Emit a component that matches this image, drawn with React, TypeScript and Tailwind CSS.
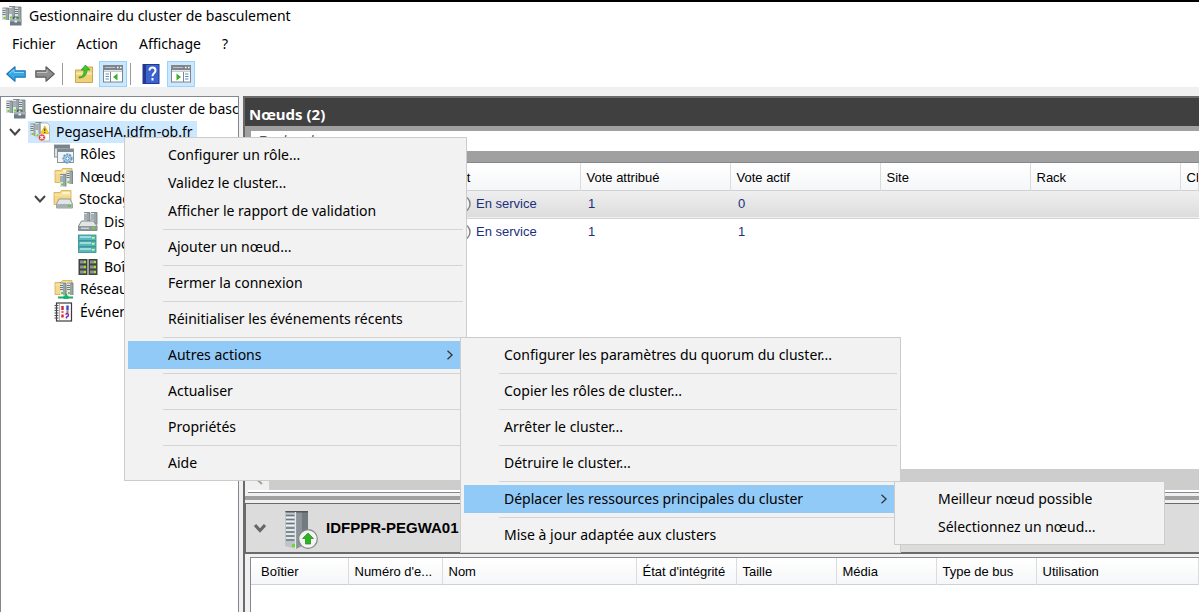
import React from 'react';

type IconProps = { className?: string };

const Tower: React.FC<{ x: number; y: number; h?: number }> = ({ x, y, h = 13 }) => (
  <g>
    <rect x={x} y={y} width="6" height={h} fill="#9aa5a9" />
    <rect x={x} y={y} width="3" height={h} fill="#dfe6e8" />
    <path d={`M${x} ${y + 2.5}h3M${x} ${y + 4.5}h3M${x} ${y + 6.5}h3`} stroke="#6d7a80" strokeWidth="1" />
    <path d={`M${x} ${y}h6v${h}`} stroke="#6f787c" strokeWidth="0.8" fill="none" />
    <rect x={x + 1} y={y + h - 3} width="2" height="2" fill="#6ed02a" />
  </g>
);

const Folder = () => (
  <>
    <path d="M1 3.500h6l1.500-2h9.500v14H1z" fill="#f4d98b" stroke="#d3ac50" strokeWidth="0.8" />
    <path d="M9 3h8v2H9z" fill="#fff3c8" />
    <path d="M1.500 6h16" stroke="#fbeab4" />
  </>
);

const ClusterIcon: React.FC<IconProps> = ({ className }) => (
  <svg viewBox="0 0 20 20" className={className} aria-hidden="true">
    <Tower x={0.5} y={2} h={12} />
    <Tower x={7} y={0.5} h={13} />
    <Tower x={13} y={1} h={13} />
    <path d="M8 13h11.500v6.500H8z" fill="#6f7b82" />
    <path d="M8 13h11.500v2.500H8z" fill="#a4b0b6" />
    <path d="M11.500 13v-2h4.500v2" stroke="#4f5a60" fill="none" />
    <rect x="12.500" y="14.500" width="2.500" height="2" fill="#e8eef0" />
  </svg>
);

const ClusterAlertIcon: React.FC<IconProps> = ({ className }) => (
  <svg viewBox="0 0 20 20" className={className} aria-hidden="true">
    <Tower x={0.5} y={2} h={12} />
    <Tower x={5.5} y={0.5} h={15} />
    <path d="M10.500 1h6.500l2.500 2.500V19h-9z" fill="#fdfdfd" stroke="#a6abb0" strokeWidth="0.8" />
    <path d="M14.800 4l4 7.500h-8z" fill="#ffd21e" stroke="#c79a00" strokeWidth="0.6" />
    <path d="M14.800 6.500v2.700M14.800 10v1" stroke="#222" strokeWidth="1" />
    <circle cx="11.800" cy="15.500" r="3.600" fill="#d8434a" stroke="#fff" strokeWidth="0.6" />
    <path d="M10.300 14l3 3M13.300 14l-3 3" stroke="#fff" strokeWidth="1.100" />
  </svg>
);

const RolesIcon: React.FC<IconProps> = ({ className }) => (
  <svg viewBox="0 0 20 20" className={className} aria-hidden="true">
    <rect x="0.5" y="1" width="15" height="12" fill="#dde2e6" stroke="#8c959b" />
    <rect x="0.5" y="1" width="15" height="3.500" fill="#79838a" />
    <rect x="3.500" y="5" width="16" height="13.500" fill="#f1f4f6" stroke="#8c959b" />
    <rect x="3.500" y="5" width="16" height="3" fill="#7f8a91" />
    <circle cx="13.500" cy="14.500" r="4.200" fill="#a9cdea" stroke="#6796bd" strokeWidth="1.800" strokeDasharray="2 1" />
    <circle cx="13.500" cy="14.500" r="1.600" fill="#fff" stroke="#6796bd" />
  </svg>
);

const NodesIcon: React.FC<IconProps> = ({ className }) => (
  <svg viewBox="0 0 20 20" className={className} aria-hidden="true">
    <Folder />
    <Tower x={6} y={7.5} h={12} />
    <Tower x={12.5} y={4} h={13} />
  </svg>
);

const StorageIcon: React.FC<IconProps> = ({ className }) => (
  <svg viewBox="0 0 20 20" className={className} aria-hidden="true">
    <Folder />
    <path d="M6 10h11l2.500 5v4H3.500v-4z" fill="#e2e5e7" stroke="#7f888d" strokeWidth="0.8" />
    <path d="M3.500 15h16v4h-16z" fill="#a8afb3" />
    <rect x="15" y="16" width="2.500" height="2" fill="#5ecb1f" />
  </svg>
);

const DisksIcon: React.FC<IconProps> = ({ className }) => (
  <svg viewBox="0 0 20 20" className={className} aria-hidden="true">
    <Tower x={6} y={0.5} h={12} />
    <Tower x={13} y={0.5} h={12} />
    <path d="M3.500 9h12l3.500 5v4.500H0.500V14z" fill="#e1e5e7" stroke="#737c81" strokeWidth="0.9" />
    <path d="M0.500 14h18.500v4.500H0.500z" fill="#8e979c" />
    <path d="M3 16.200h8" stroke="#e8ecee" />
    <rect x="14" y="15" width="3" height="2" fill="#6bd62a" />
  </svg>
);

const PoolsIcon: React.FC<IconProps> = ({ className }) => (
  <svg viewBox="0 0 20 20" className={className} aria-hidden="true">
    {[1, 7, 13].map((y) => (
      <g key={y}>
        <rect x="0.5" y={y} width="17.500" height="5.500" fill="#58b9bd" stroke="#35888d" strokeWidth="0.8" />
        <path d={`M2 ${y + 2}h11`} stroke="#b7e9ea" strokeWidth="1.500" />
        <rect x="14" y={y + 2} width="2.500" height="1.500" fill="#e4ff6a" />
      </g>
    ))}
  </svg>
);

const EnclosuresIcon: React.FC<IconProps> = ({ className }) => (
  <svg viewBox="0 0 20 20" className={className} aria-hidden="true">
    {[0.5, 10.5].map((x) => (
      <g key={x}>
        <rect x={x} y="2" width="9" height="16" fill="#3f4441" />
        {[3.5, 8.5, 13.5].map((y) => (
          <g key={y}>
            <rect x={x + 1.5} y={y} width="6" height="3" fill="#8b918d" />
            <rect x={x + 5.5} y={y + 0.5} width="2" height="2" fill="#a5e31f" />
          </g>
        ))}
      </g>
    ))}
  </svg>
);

const NetworksIcon: React.FC<IconProps> = ({ className }) => (
  <svg viewBox="0 0 20 20" className={className} aria-hidden="true">
    <Folder />
    <Tower x={6} y={4} h={12} />
    <Tower x={13} y={4} h={12} />
    <path d="M4 18.500h15M12 15v3" stroke="#22a56a" strokeWidth="1.800" />
    <rect x="9.500" y="16.500" width="5" height="3.500" fill="#18b46d" />
  </svg>
);

const EventsIcon: React.FC<IconProps> = ({ className }) => (
  <svg viewBox="0 0 20 20" className={className} aria-hidden="true">
    <rect x="2.500" y="1" width="15" height="18" fill="#fbfbfb" stroke="#3c3c3c" strokeWidth="1.200" />
    <path d="M5.500 2v16" stroke="#b5b5b5" />
    <path d="M0.500 3.500h4M0.500 6h4M0.500 8.500h4M0.500 11h4M0.500 13.500h4M0.500 16h4" stroke="#555" strokeWidth="1" />
    <path d="M8.500 4v4M8.500 12.500v3" stroke="#d4252f" strokeWidth="2.400" />
    <path d="M13.500 3.500v5" stroke="#2f4ed0" strokeWidth="2.400" />
    <path d="M7.500 10h2M12.500 10h2" stroke="#d4252f" strokeWidth="1.500" />
    <path d="M11.500 12.500q2.500-2 3 .5q0 1.500-2 2v1.500" stroke="#7b2f9c" strokeWidth="1.500" fill="none" />
  </svg>
);

const BackIcon = () => (
  <svg viewBox="0 0 20 16" className="h-4 w-5" aria-hidden="true">
    <path d="M0.800 8L9 0.800v4h10.200v6.400H9v4z" fill="#38a9e8" stroke="#2577b4" strokeWidth="1.200" strokeLinejoin="round" />
    <path d="M3.500 7.500L8 3.500V6.500h10" stroke="#8fd6fa" fill="none" />
  </svg>
);

const ForwardIcon = () => (
  <svg viewBox="0 0 20 16" className="h-4 w-5" aria-hidden="true">
    <path d="M19.200 8L11 0.800v4H0.800v6.400H11v4z" fill="#8f8f8f" stroke="#5f5f5f" strokeWidth="1.200" strokeLinejoin="round" />
    <path d="M2 6.500h10V3.500" stroke="#c4c4c4" fill="none" />
  </svg>
);

const UpFolderIcon = () => (
  <svg viewBox="0 0 20 20" className="size-5" aria-hidden="true">
    <path d="M1.500 6h8l2-3h7v15.500h-17z" fill="#f0cf78" stroke="#c79f45" strokeWidth="0.9" />
    <path d="M2 9.500h16" stroke="#fbe9ae" strokeWidth="2" />
    <path d="M5 13c4 0 5-3 5-7h-3l4.500-5L16 6h-3c0 5-3 8-8 8z" fill="#3fc432" stroke="#2a9420" strokeWidth="0.7" />
  </svg>
);

const PaneIcon: React.FC<{ side: 'left' | 'right' }> = ({ side }) => (
  <svg viewBox="0 0 20 18" className="h-[18px] w-5" aria-hidden="true">
    <rect x="0.5" y="0.5" width="19" height="16.500" fill="#fff" stroke="#7e868c" />
    <rect x="0.5" y="0.5" width="19" height="4.500" fill="#7e868c" />
    <path d="M2 2.500h10" stroke="#b9c0c5" />
    <path d="M14 2.500h1.500M17 2.500h1.500" stroke="#fff" strokeWidth="1.500" />
    <rect x="1" y="5.500" width="18" height="1.500" fill="#c5cbd0" />
    {side === 'left' ? (
      <>
        <path d="M7.500 7v10" stroke="#7e868c" />
        <path d="M2.500 9h3.500M2.500 11.500h3.500M2.500 14h3.500" stroke="#5a8fc4" />
        <path d="M14.500 8.500v7L10 12z" fill="#3fae2b" />
      </>
    ) : (
      <>
        <path d="M12.500 7v10" stroke="#7e868c" />
        <path d="M14 9h3.500M14 11.500h3.500M14 14h3.500" stroke="#5a8fc4" />
        <path d="M5.500 8.500v7L10 12z" fill="#3fae2b" />
      </>
    )}
  </svg>
);

const HelpIcon = () => (
  <svg viewBox="0 0 18 20" className="h-5 w-[18px]" aria-hidden="true">
    <rect x="1" y="0.5" width="16" height="19" fill="#3b62cf" stroke="#22388f" />
    <rect x="1" y="0.5" width="3" height="19" fill="#22388f" />
    <path d="M7.500 6.500q0-3 3-3t3 3q0 1.500-1.500 2.800t-1.500 3" stroke="#fff" strokeWidth="2" fill="none" />
    <rect x="9.500" y="14" width="2" height="2.500" fill="#fff" />
  </svg>
);

const ServerIcon = () => (
  <svg viewBox="0 0 34 40" className="h-10 w-[34px]" aria-hidden="true">
    <path d="M1 1l11 1v37L1 36z" fill="#bcc5ca" />
    <path d="M12 2h12v31l-12 6z" fill="#8b9599" />
    <path d="M18 2h6v31l-6 3z" fill="#727b7f" />
    <path d="M1 1h23v1.500H2z" fill="#4f575b" />
    <path d="M2 5.500h8.500M2 9.500h8.500M2 13.500h8.500M2 18h8.500M2 22h8.500M2 26h8.500M2 30h8.500" stroke="#6a7880" strokeWidth="1.500" />
    <path d="M2 7.500h8.500M2 11.500h8.500M2 15.500h8.500M2 20h8.500M2 24h8.500M2 28h8.500" stroke="#eef3f5" strokeWidth="1.500" />
    <path d="M11.500 2v37" stroke="#e3e9ec" strokeWidth="1.200" />
    <rect x="8" y="34" width="3" height="3" fill="#6bdc1e" />
    <circle cx="24" cy="29" r="9.300" fill="#f4f4f4" stroke="#868686" strokeWidth="1.200" />
    <path d="M24 23l5.500 5.500h-3V34h-5v-5.500h-3z" fill="#2fb324" stroke="#1c8a15" strokeWidth="0.7" />
  </svg>
);

const StatusIcon = () => (
  <svg viewBox="0 0 18 18" className="size-[18px] shrink-0" aria-hidden="true">
    <circle cx="9" cy="9" r="8" fill="#f6f6f6" stroke="#868686" strokeWidth="1.500" />
    <path d="M9 4l4.500 4.500H11V14H7V8.500H4.500z" fill="#2fb324" />
  </svg>
);

const Chevron: React.FC<IconProps> = ({ className }) => (
  <svg viewBox="0 0 12 12" className={className} fill="none" stroke="currentColor" aria-hidden="true">
    <path d="M1 3l5 5.500L11 3" />
  </svg>
);

type TreeNode = { label: string; icon: React.FC<IconProps>; indent: string; open?: boolean; selected?: boolean };

const tree: TreeNode[] = [
  { label: 'Gestionnaire du cluster de basculement', icon: ClusterIcon, indent: 'pl-[5px]' },
  { label: 'PegaseHA.idfm-ob.fr', icon: ClusterAlertIcon, indent: 'pl-[8px]', open: true, selected: true },
  { label: 'Rôles', icon: RolesIcon, indent: 'pl-[53px]' },
  { label: 'Nœuds', icon: NodesIcon, indent: 'pl-[53px]' },
  { label: 'Stockage', icon: StorageIcon, indent: 'pl-[33px]', open: true },
  { label: 'Disques', icon: DisksIcon, indent: 'pl-[77px]' },
  { label: 'Pools', icon: PoolsIcon, indent: 'pl-[77px]' },
  { label: 'Boîtiers', icon: EnclosuresIcon, indent: 'pl-[77px]' },
  { label: 'Réseaux', icon: NetworksIcon, indent: 'pl-[53px]' },
  { label: 'Événements', icon: EventsIcon, indent: 'pl-[53px]' },
];

type MenuEntry = { label: string; submenu?: MenuEntry[]; width?: string; offset?: string } | null;

const moveMenu: MenuEntry[] = [{ label: 'Meilleur nœud possible' }, { label: 'Sélectionnez un nœud...' }];

const moreMenu: MenuEntry[] = [
  { label: 'Configurer les paramètres du quorum du cluster...' },
  null,
  { label: 'Copier les rôles de cluster...' },
  null,
  { label: 'Arrêter le cluster...' },
  null,
  { label: 'Détruire le cluster...' },
  null,
  {
    label: 'Déplacer les ressources principales du cluster',
    submenu: moveMenu,
    width: 'w-[271px]',
    offset: 'left-[430px]',
  },
  null,
  { label: 'Mise à jour adaptée aux clusters' },
];

const contextMenu: MenuEntry[] = [
  { label: 'Configurer un rôle...' },
  { label: 'Validez le cluster...' },
  { label: 'Afficher le rapport de validation' },
  null,
  { label: 'Ajouter un nœud...' },
  null,
  { label: 'Fermer la connexion' },
  null,
  { label: 'Réinitialiser les événements récents' },
  null,
  { label: 'Autres actions', submenu: moreMenu, width: 'w-[441px]', offset: 'left-[332px]' },
  null,
  { label: 'Actualiser' },
  null,
  { label: 'Propriétés' },
  null,
  { label: 'Aide' },
];

const Menu: React.FC<{ items: MenuEntry[]; width: string }> = ({ items, width }) => (
  <ul role="menu" className={`${width} border border-[#cccccc] bg-[#f2f2f2] p-[3px]`}>
    {items.map((item, i) =>
      item === null ? (
        <li key={i} role="separator" className="flex h-2 items-center pl-[35px]">
          <div className="h-px w-full bg-[#d4d4d4]" />
        </li>
      ) : (
        <li key={i} role="none" className="relative">
          <button
            role="menuitem"
            className={`flex h-7 w-full items-center justify-between pr-2 pl-10 text-left whitespace-nowrap ${
              item.submenu ? 'bg-[#91c9f7]' : ''
            }`}
          >
            {item.label}
            {item.submenu && <Chevron className="size-[10px] -rotate-90 stroke-[1.5] text-[#333]" />}
          </button>
          {item.submenu && (
            <div className={`absolute -top-1 z-10 ${item.offset}`}>
              <Menu items={item.submenu} width={item.width ?? ''} />
            </div>
          )}
        </li>
      )
    )}
  </ul>
);

const th =
  'overflow-hidden border-r border-[#dcdcdc] bg-linear-to-b from-white to-[#f5f6f8] px-[6px] pt-[3px] text-left font-normal whitespace-nowrap';

const nodeRows = [
  { id: 1, status: 'En service', assigned: '1', current: '0' },
  { id: 2, status: 'En service', assigned: '1', current: '1' },
];

const App: React.FC = () => {
  return (
    <div className="relative flex min-h-screen flex-col overflow-hidden border-t-2 border-black bg-[#f0f0f0] font-['Noto_Sans','Open_Sans',sans-serif] text-[14px] leading-5 text-black">
      {/* Title bar */}
      <header className="flex h-7 items-center gap-[7px] bg-white pl-[2px]">
        <ClusterIcon className="size-5" />
        <h1>Gestionnaire du cluster de basculement</h1>
      </header>

      <nav className="flex h-7 items-center gap-[21px] bg-white pl-3">
        <button>Fichier</button>
        <button>Action</button>
        <button>Affichage</button>
        <button>?</button>
      </nav>

      {/* Toolbar */}
      <div className="flex h-[29px] items-center bg-white pt-[3px] pl-[6px]">
        <button aria-label="Précédent"><BackIcon /></button>
        <button aria-label="Suivant" className="ml-[9px]"><ForwardIcon /></button>
        <div className="ml-[7px] h-[22px] w-px bg-[#9a9a9a]" />
        <button aria-label="Dossier parent" className="ml-[11px]"><UpFolderIcon /></button>
        <button aria-label="Arborescence" className="ml-[5px] flex h-[26px] w-7 items-center justify-center border border-[#99d1ff] bg-[#cce8ff]">
          <PaneIcon side="left" />
        </button>
        <div className="ml-[3px] h-[22px] w-px bg-[#9a9a9a]" />
        <button aria-label="Aide" className="ml-[11px]"><HelpIcon /></button>
        <button aria-label="Volet Actions" className="ml-[7px] flex h-[26px] w-7 items-center justify-center border border-[#99d1ff] bg-[#cce8ff]">
          <PaneIcon side="right" />
        </button>
      </div>

      <div className="flex flex-1 gap-1 pt-[9px]">
        {/* Tree */}
        <aside className="w-[239px] shrink-0 border border-b-0 border-[#828790] bg-white">
          <ul role="tree" className="grid h-[226px] auto-rows-fr overflow-hidden pt-px">
            {tree.map((node) => (
              <li key={node.label} role="treeitem" className={`flex items-center whitespace-nowrap ${node.indent}`}>
                {node.open && <Chevron className="mr-[7px] size-3 shrink-0 stroke-2 text-[#444]" />}
                <span className={`flex h-full items-center gap-[6px] ${node.selected ? 'bg-[#cce8ff] pr-1 pl-[2px]' : ''}`}>
                  <node.icon className="size-5 shrink-0" />
                  {node.label}
                </span>
              </li>
            ))}
          </ul>
        </aside>

        <main className="flex min-w-0 flex-1 flex-col border-t-2 border-l-2 border-[#6a6a6a] font-['Liberation_Sans',Arial,sans-serif] text-[13px]">
          <h2 className="h-7 bg-[#404040] pl-1 font-['Noto_Sans','Open_Sans',sans-serif] text-[15px] leading-8 font-bold text-white">
            Nœuds (2)
          </h2>
          <div className="bg-[#a0a0a0] pt-[5px] pb-[11px] pl-[6px]">
            <input
              aria-label="Rechercher"
              placeholder="Rechercher"
              className="block h-5 w-full bg-white px-[7px] text-[14px] italic outline-none placeholder:text-[#555]"
            />
          </div>

          <section className="ml-[3px] flex flex-1 flex-col border-t border-b border-[#828790] bg-white">
            <table className="w-full table-fixed border-collapse">
              <colgroup>
                <col className="w-[182px]" />
                <col className="w-[150px]" />
                <col className="w-[150px]" />
                <col className="w-[150px]" />
                <col className="w-[150px]" />
                <col className="w-[150px]" />
                <col />
              </colgroup>
              <thead>
                <tr className="h-[27px] border-b border-[#d0d0d0]">
                  <th className={th} />
                  <th className={th}>Statut</th>
                  <th className={th}>Vote attribué</th>
                  <th className={th}>Vote actif</th>
                  <th className={th}>Site</th>
                  <th className={th}>Rack</th>
                  <th className={th}>Châssis</th>
                </tr>
              </thead>
              <tbody className="text-[#1b2f7c]">
                {nodeRows.map((row, i) => (
                  <tr
                    key={row.id}
                    className={`h-7 ${i === 0 ? 'border-b border-[#d4d4d4] bg-linear-to-b from-[#f0f0f0] to-[#dcdcdc]' : ''}`}
                  >
                    <td />
                    <td className="pl-[23px]">
                      <span className="flex items-center gap-[5px] whitespace-nowrap">
                        <StatusIcon />
                        {row.status}
                      </span>
                    </td>
                    <td className="px-2">{row.assigned}</td>
                    <td className="px-2">{row.current}</td>
                    <td />
                    <td />
                    <td />
                  </tr>
                ))}
              </tbody>
            </table>
            <div className="min-h-8 flex-1" />
            <div className="mb-[2px] flex h-[21px] bg-[#cdcdcd]">
              <button aria-label="Défiler à gauche" className="flex w-[21px] items-center justify-center bg-[#f0f0f0] text-[#a0a0a0]">
                <Chevron className="size-3 rotate-90 stroke-2" />
              </button>
            </div>
          </section>

          <div className="my-[3px] h-1 bg-[#a0a0a0]" />

          {/* Selected node */}
          <section>
            <div className="flex h-[51px] items-center border-t border-b-2 border-l border-[#6a6a6a] bg-[#dcdcdc] pl-2">
              <button aria-label="Réduire" className="text-[#666]">
                <Chevron className="size-3 stroke-[3]" />
              </button>
              <div className="mt-1 ml-[18px]"><ServerIcon /></div>
              <h3 className="ml-2 text-[15px] font-bold">IDFPPR-PEGWA01</h3>
            </div>
            <div className="mt-[3px] ml-[5px] border-t border-l border-[#828790] bg-white">
              <table className="w-full table-fixed border-collapse">
                <colgroup>
                  <col className="w-[97px]" />
                  <col className="w-[94px]" />
                  <col className="w-[194px]" />
                  <col className="w-[100px]" />
                  <col className="w-[100px]" />
                  <col className="w-[100px]" />
                  <col className="w-[100px]" />
                  <col />
                </colgroup>
                <thead>
                  <tr className="h-[27px] border-b border-[#d0d0d0]">
                    <th className={`${th} pl-[10px]`}>Boîtier</th>
                    <th className={th}>Numéro d'e...</th>
                    <th className={th}>Nom</th>
                    <th className={th}>État d'intégrité</th>
                    <th className={th}>Taille</th>
                    <th className={th}>Média</th>
                    <th className={th}>Type de bus</th>
                    <th className={th}>Utilisation</th>
                  </tr>
                </thead>
              </table>
              <div className="h-[27px]" />
            </div>
          </section>
        </main>
      </div>

      <div className="absolute top-[135px] left-[124px] z-20">
        <Menu items={contextMenu} width="w-[343px]" />
      </div>
    </div>
  );
};

export default App;
